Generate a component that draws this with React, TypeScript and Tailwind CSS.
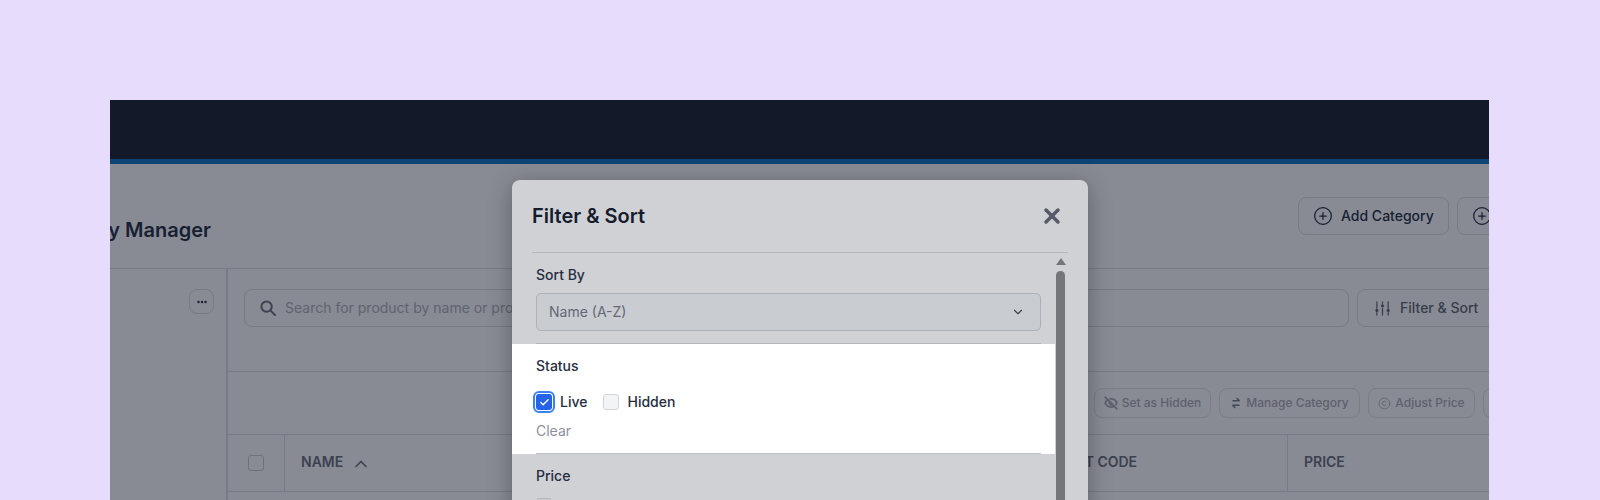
import { ChevronDown, ChevronUp, CirclePlus, Copyright, Ellipsis, EyeOff, X, Check } from "lucide-react";

function ToolButton({ icon, label, w }: { icon: React.ReactNode; label: string; w: string }) {
  return (
    <div className={`flex h-[30px] shrink-0 items-center justify-center gap-1 rounded-lg border border-[#7a7d89] text-xs font-medium text-[#5d616e] ${w}`}>
      {icon}
      {label}
    </div>
  );
}

export default function App() {
  return (
    <div className="h-[500px] overflow-hidden bg-[#e8dcfc] pl-[110px] pt-[100px] font-['Inter',sans-serif]">
      <div className="relative h-[400px] w-[1379px] overflow-hidden bg-[#888b93]">
        <div className="h-[64px] border-b-[5px] border-[#0c4476] bg-[#121928]" />

        <div className="flex h-[105px] items-start border-b border-[#787b87]">
          <div className="mt-[52px] flex w-[101px] flex-none justify-end overflow-hidden text-xl font-semibold leading-7 text-[#171f33]">
            <span className="shrink-0 whitespace-nowrap">Category Manager</span>
          </div>
          <div className="ml-[1087px] mt-[33px] flex gap-2">
            <div className="flex h-[38px] w-[151px] shrink-0 items-center gap-2 rounded-lg border border-[#767986] pl-[14px] text-sm font-medium text-[#171f33]">
              <CirclePlus size={20} strokeWidth={1.5} />
              Add Category
            </div>
            <div className="flex h-[38px] w-[151px] shrink-0 items-center gap-2 rounded-lg border border-[#767986] pl-[14px] text-sm font-medium text-[#171f33]">
              <CirclePlus size={20} strokeWidth={1.5} />
              Add Product
            </div>
          </div>
        </div>

        <div className="flex h-[231px]">
          <div className="flex w-[118px] flex-none justify-end border-r-2 border-[#787b87] pr-3 pt-5">
            <div className="flex h-[25px] w-[25px] items-center justify-center rounded-lg border border-[#767986] text-[#171f33]">
              <Ellipsis size={12} strokeWidth={3} />
            </div>
          </div>
          <div className="min-w-0 flex-1">
            <div className="flex h-[103px] gap-2 border-b border-[#787b87] pl-4 pt-5">
              <div className="flex h-[38px] w-[1105px] flex-none items-center gap-[9px] rounded-lg border border-[#767986] pl-[15px] text-sm text-[#5f636f]">
                <svg width="16" height="16" viewBox="0 0 16 16" fill="none" stroke="#3e4351" strokeWidth="2" strokeLinecap="round">
                  <circle cx="6.6" cy="6.6" r="5.2" />
                  <path d="M10.6 10.6 15 15" />
                </svg>
                Search for product by name or product code
              </div>
              <div className="flex h-[38px] w-[150px] flex-none items-center gap-[10px] rounded-lg border border-[#767986] pl-[17px] text-sm font-medium text-[#383d4b]">
                <svg width="15" height="15" viewBox="0 0 16 16" fill="#383d4b" stroke="#383d4b" strokeWidth="1.3" strokeLinecap="round">
                  <path d="M2 1v6.5M2 12.5V15M8 1v1.5M8 7.5V15M14 1v6.5M14 12.5V15" fill="none" />
                  <circle cx="2" cy="10" r="1" />
                  <circle cx="8" cy="5" r="1" />
                  <circle cx="14" cy="10" r="1" />
                </svg>
                Filter &amp; Sort
              </div>
            </div>
            <div className="flex h-[63px] gap-2 border-b border-[#787b87] pl-[866px] pt-4">
              <ToolButton w="w-[117px]" label="Set as Hidden" icon={<EyeOff size={14} strokeWidth={3} />} />
              <ToolButton
                w="w-[141px]"
                label="Manage Category"
                icon={
                  <svg width="12" height="12" viewBox="0 0 12 12" fill="none" stroke="#444957" strokeWidth="1.5" strokeLinecap="round" strokeLinejoin="round">
                    <path d="M3 3.8h6M7.2 1.6l2 2.2" />
                    <path d="M9 8.2H3M4.8 10.4l-2-2.2" />
                  </svg>
                }
              />
              <ToolButton w="w-[107px]" label="Adjust Price" icon={<Copyright size={13} strokeWidth={1.5} />} />
              <ToolButton w="w-[100px]" label="Delete" icon={<X size={13} />} />
            </div>
            <div className="flex h-[57px] border-b border-[#787b87] text-sm font-semibold text-[#3c4150]">
              <div className="flex w-[57px] flex-none items-center justify-center border-r border-[#787b87] pr-px">
                <div className="h-4 w-4 rounded-[3px] border border-[#6e717c]" />
              </div>
              <div className="flex w-[740px] flex-none items-center gap-2 pl-4 pb-[2px]">
                NAME
                <ChevronUp size={20} strokeWidth={2} className="mt-[3px]" />
              </div>
              <div className="flex w-[263px] flex-none items-center border-r border-[#787b87] pb-[2px]">
                PRODUCT CODE
              </div>
              <div className="flex flex-1 items-center pl-4 pb-[2px]">PRICE</div>
            </div>
          </div>
        </div>

        <div className="absolute left-[402px] top-[80px] h-[340px] w-[576px] rounded-t-lg bg-[#d0d1d5] shadow-[0_4px_24px_rgba(0,0,0,0.3)]">
          <div className="mx-5 flex h-[73px] items-start justify-between border-b border-[#b5b7bd] pt-[22px]">
            <div className="text-xl font-semibold leading-7 text-[#151c2e]">Filter &amp; Sort</div>
            <X size={24} strokeWidth={3.5} className="mr-1 mt-[2px] text-[#555a68]" />
          </div>

          <div className="flex">
            <div className="w-[543px] flex-none">
              <div className="ml-6 mr-[14px] h-[91px] border-b border-[#b5b7bd] pt-3">
                <div className="text-sm font-medium leading-5 text-[#262d3f]">Sort By</div>
                <div className="mt-2 flex h-[38px] items-center justify-between rounded-[5px] border border-[#aeb1b9] bg-[#c9ccd1] pl-3 pr-[15px] text-sm text-[#646874]">
                  Name (A-Z)
                  <ChevronDown size={14} strokeWidth={2} className="text-[#3e4351]" />
                </div>
              </div>
              <div className="h-[110px] bg-white pl-6 pr-[14px]">
                <div className="h-[110px] border-b border-[#bfc1c6] pt-3">
                  <div className="text-sm font-medium leading-5 text-[#262d3f]">Status</div>
                  <div className="mt-[18px] flex h-4 items-center text-sm font-medium text-[#262d3f]">
                    <div className="flex h-4 w-4 items-center justify-center rounded-[3px] bg-[#2563eb] outline-2 outline-offset-1 outline-[#3b82f6]">
                      <Check size={11} strokeWidth={3} className="text-white" />
                    </div>
                    <span className="ml-2">Live</span>
                    <div className="ml-4 h-4 w-4 rounded-[3px] border border-[#d1d5db] bg-[#f3f4f6]" />
                    <span className="ml-2">Hidden</span>
                  </div>
                  <div className="mt-[11px] text-sm leading-5 text-[#8b909c]">Clear</div>
                </div>
              </div>
              <div className="pl-6 pt-3">
                <div className="text-sm font-medium leading-5 text-[#262d3f]">Price</div>
                <div className="mt-3 h-4 w-4 rounded-[3px] border border-[#b5b7bd] bg-[#c9cacf]" />
              </div>
            </div>
            <div className="ml-px flex w-[9px] flex-none flex-col items-center pt-[5px]">
              <div className="h-0 w-0 border-x-[5px] border-b-[7px] border-x-transparent border-b-[#75767a]" />
              <div className="mt-[6px] h-[260px] w-[9px] rounded-t-full bg-[#75767a]" />
            </div>
          </div>
        </div>
      </div>
    </div>
  );
}
